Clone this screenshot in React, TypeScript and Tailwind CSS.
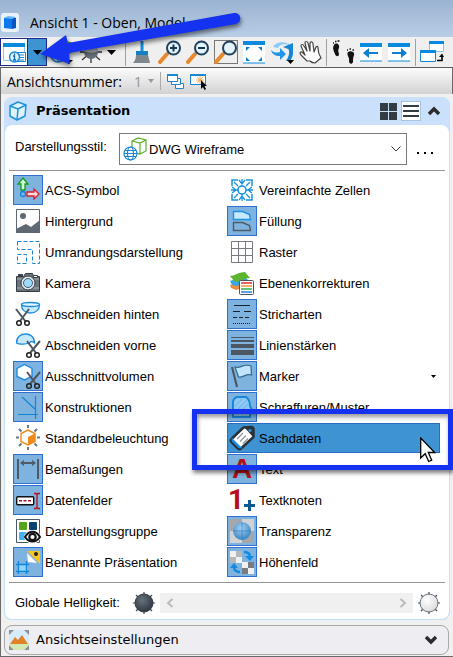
import React, { useState } from 'react'
import type { ReactNode } from 'react'

const Glyph = ({ children, size = 30 }: { children: ReactNode; size?: number }) => (
    <svg viewBox={`0 0 ${size} ${size}`} width={size} height={size} fill="none" aria-hidden="true" className="block shrink-0">
        {children}
    </svg>
)

const Caret = () => (
    <svg viewBox="0 0 9 5" width="9" height="5" aria-hidden="true"><path d="M0 0h9L4.500 5z" fill="#000" /></svg>
)

const Chevron = ({ down = false }: { down?: boolean }) => (
    <svg viewBox="0 0 14 10" width="14" height="10" fill="none" aria-hidden="true">
        <path d={down ? 'M2 2l5 5 5-5' : 'M2 8l5-5 5 5'} stroke="#2b2b2b" strokeWidth="3.4" />
    </svg>
)

const Scissors = () => (
    <g>
        <path d="M14 11l9 12M27 11l-10 12" stroke="#4d5660" strokeWidth="2" />
        <circle cx="16" cy="25" r="2.300" stroke="#222" strokeWidth="1.500" />
        <circle cx="24" cy="25" r="2.300" stroke="#222" strokeWidth="1.500" />
    </g>
)

const Magnifier = ({ children }: { children?: ReactNode }) => (
    <g>
        <path d="M2 22l7-8" stroke="#e8892b" strokeWidth="4" strokeLinecap="round" />
        <path d="M9 14l3-3" stroke="#8a949c" strokeWidth="2" />
        <circle cx="15.500" cy="8" r="6.500" fill="#e3f3fd" stroke="#1f3f5c" strokeWidth="2" />
        {children}
    </g>
)

const Sun = ({ dark = false }: { dark?: boolean }) => (
    <Glyph size={24}>
        <defs>
            <radialGradient id={dark ? 'sunDark' : 'sunLight'} cx="0.4" cy="0.35" r="0.7">
                <stop offset="0" stopColor={dark ? '#66727e' : '#ffffff'} />
                <stop offset="1" stopColor={dark ? '#2d353e' : '#d9d9d9'} />
            </radialGradient>
        </defs>
        <path d="M12 1v22M1 12h22M4 4l16 16M20 4L4 20" stroke="#3e4954" strokeWidth="1.200" />
        <circle cx="12" cy="12" r="9" fill={dark ? 'url(#sunDark)' : 'url(#sunLight)'} stroke={dark ? '#333c46' : '#66727d'} />
    </Glyph>
)

const WindowArrow = ({ right = false }: { right?: boolean }) => (
    <Glyph size={24}>
        <path d="M1 3h22v18H1z" fill="#fff" />
        <path d="M1 3h22v4H1z" fill="#0a8ade" />
        <path d="M1 21h22" stroke="#0a8ade" />
        <path d={right ? 'M5 13h12' : 'M19 13H7'} stroke="#0a7fd4" strokeWidth="2" />
        <path d={right ? 'M14 8l6 5-6 5z' : 'M10 8l-6 5 6 5z'} fill="#0a7fd4" />
    </Glyph>
)

const acs = (
    <Glyph>
        <path d="M10 3l5 6h-3v6H8V9H5z" fill="#d8f7d8" stroke="#129c22" strokeWidth="1.300" />
        <circle cx="10" cy="19" r="2.500" stroke="#1583dc" strokeWidth="1.300" />
        <path d="M26 19l-5-5v3h-7v4h7v3z" fill="#ffdada" stroke="#d51f2e" strokeWidth="1.300" />
    </Glyph>
)

const background = (
    <Glyph>
        <path d="M3.500 3.500h23v23h-23z" fill="#fff" stroke="#5d6873" />
        <circle cx="10" cy="10" r="3" fill="#5d6873" />
        <path d="M3 23l10-5 5 3 9-7v13H3z" fill="#5d6873" />
    </Glyph>
)

const outline = (
    <Glyph>
        <path d="M4.500 4.500h22v22h-7v-14h-15zM4.500 17.500h9v9h-9z" stroke="#1b86d2" strokeDasharray="4 2" />
    </Glyph>
)

const camera = (
    <Glyph>
        <path d="M5 6h5v2H5z" fill="#3f464d" />
        <path d="M3.500 8.500h7l2-3h7l1 3h6v15h-23z" fill="#6c757e" stroke="#343b42" />
        <path d="M4 11h22M4 20h22" stroke="#aab1b7" />
        <path d="M20.500 7.500h4v2h-4z" fill="#fff" stroke="#343b42" />
        <circle cx="15" cy="15" r="7" fill="#e6eaed" stroke="#343b42" />
        <circle cx="15" cy="15" r="4.500" fill="#9fdcfa" stroke="#3e5b70" />
    </Glyph>
)

const cutBack = (
    <Glyph>
        <path d="M8.500 6c0 5 4 8 9 8s9-3 9-8z" fill="#c7e9fb" stroke="#1b8de0" strokeWidth="1.300" />
        <ellipse cx="17.500" cy="5.500" rx="9" ry="2" fill="#e7f6fe" stroke="#1b8de0" strokeWidth="1.300" />
        <path d="M3 10l10 13M16 10L7 22" stroke="#4d5660" strokeWidth="2" />
        <circle cx="6" cy="24" r="2.300" stroke="#222" strokeWidth="1.500" />
        <circle cx="14" cy="24" r="2.300" stroke="#222" strokeWidth="1.500" />
    </Glyph>
)

const cutFront = (
    <Glyph>
        <path d="M3.500 13c0-6 4-9 9-9s9 3 9 9c-2-2-4-2-5 0-3 1-10 2-13 0z" fill="#c7e9fb" stroke="#1b8de0" strokeWidth="1.300" />
        <Scissors />
    </Glyph>
)

const clipVolume = (
    <Glyph>
        <path d="M11.500 3.500l7.500 4v8l-7.500 3.500L4 15.500v-8z" fill="#fff" stroke="#1b8de0" strokeWidth="1.400" />
        <Scissors />
    </Glyph>
)

const construction = (
    <Glyph>
        <path d="M9 5l13 12M22.500 4v23M5 22.500h20" stroke="#1483d6" strokeWidth="1.200" />
    </Glyph>
)

const lighting = (
    <Glyph>
        <path d="M15 2v3M15 24v3M3 14.500h3M24 14.500h3M6 6l2.500 2.500M24 6l-2.500 2.500M6 23l2.500-2.500M24 23l-2.500-2.500" stroke="#66788a" strokeWidth="2" />
        <path d="M15 7l7 3.500v8L15 22l-7-3.500v-8z" fill="#fff" stroke="#ec8a1b" strokeWidth="1.400" />
        <path d="M15 14l7-3.500v8L15 22z" fill="#ec8a1b" />
    </Glyph>
)

const dimension = (
    <Glyph>
        <path d="M5 5v20M25 5v20M8 9h14" stroke="#505a66" strokeWidth="2" />
        <path d="M7 9l4-3v6zM23 9l-4-3v6z" fill="#505a66" />
    </Glyph>
)

const dataFields = (
    <Glyph>
        <rect x="3.700" y="11.700" width="17" height="8" rx="1" fill="#fff" stroke="#111" strokeWidth="1.400" />
        <path d="M6 15.700h13" stroke="#9a1420" strokeWidth="1.400" strokeDasharray="3 1.500" />
        <path d="M21 8.500h2l1 1 1-1h2M24 9v14M21 23.500h2l1-1 1 1h2" stroke="#b0121c" strokeWidth="1.300" />
    </Glyph>
)

const displayGroup = (
    <Glyph>
        <path d="M3.500 3.500h23v23h-23z" fill="#fff" stroke="#4d5962" />
        <rect x="6" y="6" width="8" height="8" rx="1" fill="#55a51c" />
        <rect x="16" y="6" width="8" height="8" rx="1" fill="#0a446e" />
        <rect x="6" y="16" width="8" height="8" rx="1" fill="#45b4f5" />
        <ellipse cx="19.500" cy="21" rx="8.500" ry="6.500" fill="#fff" />
        <path d="M12 21c4-7 11-7 15 0-4 6-11 6-15 0z" fill="#fff" stroke="#111" strokeWidth="2" />
        <circle cx="19.500" cy="21" r="3.200" fill="#fff" stroke="#111" strokeWidth="2.200" />
    </Glyph>
)

const namedView = (
    <Glyph>
        <path d="M5.500 17.500h9v8h-9z" fill="#8fd3fb" />
        <path d="M5.500 14v13M13.500 14v13M3 17.500h13M3 24.500h13" stroke="#0f86dc" strokeWidth="1.300" />
        <path d="M14 4h13v13z" fill="#fac61e" />
        <path d="M14 6l10 10-9-1z" fill="#fff" />
        <circle cx="23" cy="7" r="2" fill="#222" />
    </Glyph>
)

const cells = (
    <Glyph>
        <path d="M5 11V5h6M19 5h6v6M25 19v6h-6M11 25H5v-6" stroke="#1b93e0" strokeWidth="1.500" />
        <path d="M15 4v7M15 19v7M4 15h7M19 15h7M7 7l4 4M23 7l-4 4M7 23l4-4M23 23l-4-4M12 5l3 4 3-4M12 25l3-4 3 4M5 12l4 3-4 3M25 12l-4 3 4 3" stroke="#1b93e0" strokeWidth="1.300" />
        <circle cx="15" cy="15" r="4" fill="#fff" stroke="#1b93e0" strokeWidth="1.600" />
    </Glyph>
)

const fill = (
    <Glyph>
        <path d="M6.500 5.500h9l7 3 1 5h-17z" fill="#c8e9fd" stroke="#1b93e0" strokeWidth="1.400" />
        <path d="M6.500 16.500h9l7 3 1 5h-17z" stroke="#4f5b66" strokeWidth="1.400" />
    </Glyph>
)

const gridIcon = (
    <Glyph>
        <path d="M4.500 4.500h21v21h-21zM11.500 4v22M18.500 4v22M4 11.500h22M4 18.500h22" stroke="#76797d" />
    </Glyph>
)

const layers = (
    <Glyph>
        <path d="M3 17l14-5 5 6-13 4-5-2z" fill="#e9913c" />
        <path d="M3 13l14-5 5 5-12 5-5-1z" fill="#3aa5e4" />
        <path d="M3 8c5 0 8-4 15-4l5 6c-7 0-9 4-15 4z" fill="#5bb531" />
        <rect x="12.500" y="12.500" width="14" height="14" rx="1" fill="#fff" stroke="#4b5560" />
        <path d="M14 15h11" stroke="#e02f2f" strokeWidth="1.500" />
        <path d="M14 18h11" stroke="#f09433" strokeWidth="1.500" />
        <path d="M14 21h11" stroke="#2eb04d" strokeWidth="1.500" />
        <path d="M14 24h11" stroke="#2a7fe0" strokeWidth="1.500" />
    </Glyph>
)

const lineStyles = (
    <Glyph>
        <path d="M7 6.500h16" stroke="#16222e" />
        <path d="M6 12.500h18" stroke="#16222e" strokeDasharray="7 4" />
        <path d="M6 18.500h18" stroke="#16222e" strokeDasharray="4 2" />
        <path d="M6 24.500h18" stroke="#16222e" strokeDasharray="1 1" />
    </Glyph>
)

const lineWeights = (
    <Glyph>
        <path d="M4 7h23v1H4zM4 10h23v2H4zM4 14h23v4H4zM4 20h23v5H4z" fill="#4c5762" />
    </Glyph>
)

const marker = (
    <Glyph>
        <path d="M5 6l5 20" stroke="#4a545e" strokeWidth="2" />
        <path d="M8 6c6 2 8-4 16-1l.5 9c-6-2-8 3-13 2z" fill="#c0e5fb" stroke="#35688f" strokeWidth="1.200" />
    </Glyph>
)

const hatch = (
    <Glyph>
        <path d="M10 5h9c3 2 4 5 4 9l2 4-2 1v6H6V11c0-3 1-5 4-6z" fill="#8ec9f4" stroke="#1787de" strokeWidth="2" />
        <path d="M8 14l7-7M8 20L20 8M10 23l11-11M15 23l6-6" stroke="#6bb2ea" />
    </Glyph>
)

const tag = (
    <Glyph>
        <path d="M16.500 4.500L24 4c1.500 0 2.500 1 2.500 2.500V14L14 25.500c-1 1-2 1-3 0L4.500 19c-1-1-1-2 0-3z" fill="#fff" stroke="#2b3238" strokeWidth="2.500" strokeLinejoin="round" />
        <path d="M17 4l8 0 2 3-1 7z" fill="#2b3238" />
        <path d="M5.500 16.500l8 8-1.500 0-6.500-6.500z" fill="#1b8de0" stroke="#1b8de0" strokeWidth="1.500" />
        <path d="M10 16l6-6M13 18.500l6-6M16 20.500l5-5" stroke="#8b949c" strokeWidth="1.200" />
        <circle cx="23" cy="7.500" r="1.600" fill="#3e93d3" />
    </Glyph>
)

const letterA = (
    <span className="block w-[28px] text-center font-['Liberation_Sans',sans-serif] text-[28px] leading-[30px] font-bold text-[#b5101a]">A</span>
)

const textNode = (
    <span className="flex w-[28px] items-end font-['Roboto',sans-serif] text-[28px] leading-[30px] font-bold text-[#b5101a]">
        1
        <svg viewBox="0 0 11 15" width="11" height="15" fill="none" aria-hidden="true" className="shrink-0">
            <path d="M5.500 0v11M0 5.500h11" stroke="#0b5a94" strokeWidth="3" />
        </svg>
    </span>
)

const transparency = (
    <Glyph>
        <defs>
            <radialGradient id="sphere" cx="0.45" cy="0.35" r="0.7">
                <stop offset="0" stopColor="#a3d2f3" />
                <stop offset="1" stopColor="#2f7fc0" />
            </radialGradient>
        </defs>
        <rect x="3" y="3" width="24" height="24" rx="2" fill="#a4a8ad" />
        <path d="M15 3h12v12H15zM3 15h12v12H3z" fill="#d0d3d6" />
        <circle cx="15" cy="15" r="9" fill="url(#sphere)" />
        <path d="M15 6v18M6 15h18" stroke="#2d6fa8" strokeWidth="0.500" />
    </Glyph>
)

const heightField = (
    <Glyph>
        <path d="M3 4h12v12H3zM15 15h12v12H15z" fill="#f0f0f0" />
        <path d="M9 4h6v6H9zM3 10h6v6H3z" fill="#b4b7bb" />
        <path d="M21 15h6v6h-6zM15 21h6v6h-6z" fill="#777c82" />
        <path d="M17 5c4 0 6 2 6 5M13 25c-4 0-6-2-6-5" stroke="#118be0" strokeWidth="2.400" />
        <path d="M18 9h9l-4 5zM3 21h8l-4-5z" fill="#118be0" />
    </Glyph>
)

type Item = { label: string; icon: ReactNode; on?: boolean }

const leftItems: Item[] = [
    { label: 'ACS-Symbol', icon: acs, on: true },
    { label: 'Hintergrund', icon: background },
    { label: 'Umrandungsdarstellung', icon: outline },
    { label: 'Kamera', icon: camera },
    { label: 'Abschneiden hinten', icon: cutBack },
    { label: 'Abschneiden vorne', icon: cutFront },
    { label: 'Ausschnittvolumen', icon: clipVolume, on: true },
    { label: 'Konstruktionen', icon: construction, on: true },
    { label: 'Standardbeleuchtung', icon: lighting },
    { label: 'Bemaßungen', icon: dimension, on: true },
    { label: 'Datenfelder', icon: dataFields, on: true },
    { label: 'Darstellungsgruppe', icon: displayGroup },
    { label: 'Benannte Präsentation', icon: namedView, on: true },
]

const rightItems: Item[] = [
    { label: 'Vereinfachte Zellen', icon: cells },
    { label: 'Füllung', icon: fill, on: true },
    { label: 'Raster', icon: gridIcon },
    { label: 'Ebenenkorrekturen', icon: layers },
    { label: 'Stricharten', icon: lineStyles, on: true },
    { label: 'Linienstärken', icon: lineWeights, on: true },
    { label: 'Marker', icon: marker, on: true },
    { label: 'Schraffuren/Muster', icon: hatch, on: true },
    { label: 'Sachdaten', icon: tag },
    { label: 'Text', icon: letterA, on: true },
    { label: 'Textknoten', icon: textNode },
    { label: 'Transparenz', icon: transparency, on: true },
    { label: 'Höhenfeld', icon: heightField, on: true },
]

const ToggleRow = ({ item }: { item: Item }) => {
    const [on, setOn] = useState(!!item.on)
    const hovered = item.label === 'Sachdaten'

    return (
        <div className="relative">
            <button
                type="button"
                aria-pressed={on}
                onClick={() => setOn(!on)}
                className={`flex h-[30px] w-full items-center gap-0.5 text-left ${hovered ? 'bg-[#3e93d3] outline -outline-offset-1 outline-[#2a6cc4]' : ''}`}
            >
                <span className={`flex size-[30px] shrink-0 items-center justify-center ${on ? 'bg-[#7fb3df] outline -outline-offset-1 outline-[#2f6fd0]' : ''}`}>
                    {item.icon}
                </span>
                <span className="flex-1 pt-0.5 whitespace-nowrap">{item.label}</span>
                {item.label === 'Marker' && (
                    <svg viewBox="0 0 5 3" width="5" height="3" aria-hidden="true" className="mr-1"><path d="M0 0h5L2.500 3z" fill="#000" /></svg>
                )}
            </button>
            {hovered && (
                <>
                    <div className="pointer-events-none absolute -top-3.5 -right-[13px] -bottom-[17px] -left-[35px] z-10 border-[5px] border-[#1532f0] shadow-[1px_3px_4px_rgba(0,0,0,0.5),inset_1px_3px_4px_rgba(0,0,0,0.4)]" />
                    <svg viewBox="0 0 16 26" width="16" height="26" aria-hidden="true" className="pointer-events-none absolute top-3.5 right-1 z-20">
                        <path d="M.7 1v20l4.500-4.300 3.500 7.800 3-1.300-3.400-7.700h6.400z" fill="#fff" stroke="#000" strokeWidth="1.300" />
                    </svg>
                </>
            )}
        </div>
    )
}

const ToolButton = ({ label, children }: { label: string; children: ReactNode }) => (
    <button type="button" aria-label={label} className="flex h-7 w-7 shrink-0 items-center justify-center">{children}</button>
)

const Separator = () => <span className="mx-0.5 h-[27px] w-px shrink-0 bg-[#a0a0a0]" />

const App = () => {
    return (
        <div className="relative flex min-h-screen flex-col overflow-hidden bg-[#f0f0f0] font-['Liberation_Sans',Arial,sans-serif] text-[13px] text-black">

            {/* title bar */}
            <header className="flex h-[37px] items-center gap-2.5 bg-linear-to-b from-[#9ab3d1] to-[#b9cee6] pt-2 font-['Open_Sans',sans-serif] text-[14px]">
                <svg viewBox="0 0 20 20" width="20" height="20" fill="none" aria-hidden="true">
                    <rect x="1" y="0" width="18" height="19" rx="3" fill="#e9f2fb" />
                    <path d="M4 5l8-1v12l-8-1z" fill="#0b78ee" />
                    <path d="M12 4l4 1v10l-4 1z" fill="#0653c4" />
                    <path d="M4 5l4-2 8 1-4 2z" fill="#64b5fb" />
                </svg>
                <h1>Ansicht 1 - Oben, Model</h1>
            </header>

            {/* tools */}
            <div className="flex h-[31px] items-center overflow-hidden border-b border-[#5a5a5a] bg-[#efefef]">
                <button type="button" aria-label="Ansichtsattribute" className="flex h-7 w-[47px] shrink-0 items-center border border-[#1c2a8c] bg-[#3e93d3]">
                    <span className="flex h-full w-[27px] items-center justify-center border-r border-[#1c2a8c] bg-white">
                        <Glyph size={24}>
                            <path d="M1.500 3.500h21v17h-21z" fill="#fff" stroke="#8ac4ee" />
                            <path d="M1 3h22v4H1z" fill="#0a8ade" />
                            <path d="M13.500 12.500h10v9h-10zM17 15h5M17 17.500h5M17 20h5" fill="#fff" stroke="#1687d8" />
                            <circle cx="12.500" cy="17" r="5" fill="#dff1fd" stroke="#1687d8" strokeWidth="1.400" />
                            <path d="M12.500 13.500v1.500M11 16h1.500v4M11 20h3" stroke="#1268b8" strokeWidth="1.300" />
                        </Glyph>
                    </span>
                    <span className="flex flex-1 justify-center"><Caret /></span>
                </button>
                <ToolButton label="Darstellungsstil">
                    <Glyph size={24}>
                        <path d="M11 5l5-4 6 2v9l-5 3" fill="#fff" stroke="#51a82a" strokeWidth="1.500" />
                        <circle cx="9" cy="15" r="7" fill="#e8f5fd" stroke="#1b86d2" strokeWidth="1.500" />
                        <path d="M2 15h14M9 8v14" stroke="#1b86d2" />
                        <path d="M15 20h9l-4.500 4z" fill="#000" />
                    </Glyph>
                </ToolButton>
                <button type="button" aria-label="Helligkeit" className="flex h-7 w-[48px] shrink-0 items-center gap-1 pl-1">
                    <Glyph size={24}>
                        <path d="M12 12v11M12 12L3 20M12 12l9 8M12 12H1M12 12h11" stroke="#333" strokeWidth="1.300" />
                        <circle cx="12" cy="12" r="7" fill="#646c74" />
                        <path d="M5 11c1-4 3-6 7-6s6 2 7 6c-4 2-10 2-14 0z" fill="#b9bfc4" />
                    </Glyph>
                    <Caret />
                </button>
                <Separator />
                <ToolButton label="Ansicht aktualisieren">
                    <Glyph size={24}>
                        <path d="M10.500 1h3v11h-3z" fill="#1390de" />
                        <path d="M6 11h12v4H6z" fill="#147fc4" />
                        <path d="M6 15h12l2 8H3c2-2 3-5 3-8z" fill="#7f878d" />
                    </Glyph>
                </ToolButton>
                <ToolButton label="Vergrößern">
                    <Glyph size={24}><Magnifier><path d="M15.500 4.500v7M12 8h7" stroke="#16364f" strokeWidth="2" /></Magnifier></Glyph>
                </ToolButton>
                <ToolButton label="Verkleinern">
                    <Glyph size={24}><Magnifier><path d="M12 8h7" stroke="#16364f" strokeWidth="2" /></Magnifier></Glyph>
                </ToolButton>
                <ToolButton label="Fenster vergrößern">
                    <Glyph size={24}>
                        <path d="M.5.500h23v23H.5z" stroke="#000" strokeDasharray="1 1" />
                        <Magnifier />
                    </Glyph>
                </ToolButton>
                <ToolButton label="Ansicht einpassen">
                    <Glyph size={24}>
                        <path d="M1 1h22v22H1z" fill="#fff" />
                        <path d="M1 1h22v4H1z" fill="#0a8ade" />
                        <path d="M1 23h22" stroke="#0a8ade" />
                        <path d="M4 7h4l-4 4zM20 7h-4l4 4zM4 21v-4l4 4zM20 21v-4l-4 4z" fill="#0a7fd4" />
                    </Glyph>
                </ToolButton>
                <ToolButton label="Ansicht drehen">
                    <Glyph size={24}>
                        <path d="M3 7c3-6 14-6 18-1-5-3-12-2-13 2z" fill="#8bcaf3" />
                        <path d="M17 6c3 4 3 9-1 15h4c4-5 4-11 1-15z" fill="#1587d4" />
                        <path d="M1 10c3 3 6 3 9 2V8l6 6-6 6v-4c-5 0-8-2-9-6z" fill="#2296e4" />
                        <path d="M13 7l10-4v8z" fill="#1587d4" />
                        <path d="M17 20h7l-3.500 4z" fill="#000" />
                    </Glyph>
                </ToolButton>
                <ToolButton label="Ansicht verschieben">
                    <Glyph size={24}>
                        <path d="M9 21L3 15c-2-3 0-4 2-2l2 2L3 6c0-2 2-2 3 0l3 5-2-8c0-2 2-2 3 0l2 8V3c1-2 3-1 3 1l1 8 2-5c1-1 2-1 2 1 0 4 1 7 3 10l-6 5c-2 0-4-1-5-2z" fill="#fff" stroke="#444" strokeWidth="1.200" strokeLinejoin="round" />
                    </Glyph>
                </ToolButton>
                <Separator />
                <ToolButton label="Begehen">
                    <Glyph size={24}>
                        <path d="M3 5c2-3 6-1 5 3-1 2-1 3 0 6 0 3-3 3-4 0C3 11 1 8 3 5z" fill="#111" />
                        <path d="M17 12c3-2 7 0 6 3s-1 4-1 7c-1 3-4 2-4-1 1-3-3-6-1-9z" fill="#111" />
                        <path d="M2 3h1M4 1.500h1.500M6.500 1h2M16 10h1M18.500 9h1.500M21.500 10h1.500" stroke="#111" strokeWidth="1.600" />
                    </Glyph>
                </ToolButton>
                <ToolButton label="Vorherige Ansicht"><WindowArrow /></ToolButton>
                <ToolButton label="Nächste Ansicht"><WindowArrow right /></ToolButton>
                <Separator />
                <ToolButton label="Ansicht kopieren">
                    <Glyph size={24}>
                        <path d="M9.500 1.500h14v10h-14z" fill="#fff" stroke="#8ac4ee" />
                        <path d="M9 1h15v3H9z" fill="#0a8ade" />
                        <path d="M.5 10.500h15v11H.5z" fill="#fff" stroke="#1687d8" />
                        <path d="M0 10h16v3H0z" fill="#0a8ade" />
                        <path d="M17 20.500h5V15" stroke="#000" strokeWidth="1.600" />
                        <path d="M19 17l3-3.500 2 3.500z" fill="#000" />
                    </Glyph>
                </ToolButton>
            </div>

            {/* view number */}
            <div className="flex h-[26px] items-center border-x border-[#6b6b6b] bg-linear-to-b from-[#fcfcfc] to-[#d2d2d2] pl-1.5 font-['Open_Sans',sans-serif] text-[14px]">
                <span>Ansichtsnummer:</span>
                <button type="button" aria-label="Ansichtsnummer wählen" className="ml-3 flex items-center gap-1.5 text-[#9a8f8f]">
                    1
                    <svg viewBox="0 0 6 4" width="6" height="4" aria-hidden="true"><path d="M0 0h6L3 4z" fill="#999" /></svg>
                </button>
                <span className="mx-1.5 h-[18px] w-px bg-[#aaa]" />
                <button type="button" aria-label="Ansichten stapeln">
                    <svg viewBox="0 0 17 17" width="17" height="17" fill="none" aria-hidden="true">
                        <path d="M8.500 10.500h8v5h-8z" fill="#fff" stroke="#1b86d2" />
                        <path d="M4.500 5.500h9v6h-9z" fill="#fff" stroke="#1b86d2" />
                        <path d="M.5 1.500h10v7H.5z" fill="#fff" stroke="#1b86d2" />
                        <path d="M0 1h11v2H0z" fill="#1b86d2" />
                    </svg>
                </button>
                <button type="button" aria-label="Neue Ansicht" className="ml-1.5">
                    <svg viewBox="0 0 18 18" width="18" height="18" fill="none" aria-hidden="true">
                        <path d="M.5 2.500h15v10H.5z" fill="#fff" stroke="#1b86d2" />
                        <path d="M0 2h16v2H0z" fill="#1b86d2" />
                        <path d="M10 4v8M6 8h8M7 5l6 6M13 5l-6 6" stroke="#efaa4d" />
                        <path d="M11 8v9l2-2 1.500 3 1.500-1-1.500-3H17z" fill="#000" />
                    </svg>
                </button>
            </div>

            <main className="flex flex-1 flex-col gap-[5px] border-b-2 border-l border-[#6b6b6b] px-[3px] pt-[3px] pb-px">
                <section className="rounded-lg border-r border-[#c4def6] bg-[#cae0fb]">
                    <div className="flex h-7 items-center pr-2 pl-1">
                        <svg viewBox="0 0 20 20" width="20" height="20" fill="none" aria-hidden="true">
                            <path d="M2 5l8-4 8 3-1 11-8 4-7-4z" fill="#dff2fd" stroke="#1b93e0" strokeWidth="1.500" strokeLinejoin="round" />
                            <path d="M2 5l8 3 8-4M10 8l-1 11" stroke="#1b93e0" strokeWidth="1.500" />
                        </svg>
                        <h2 className="ml-2 flex-1 font-['DejaVu_Sans',Verdana,sans-serif] font-bold">Präsentation</h2>
                        <button type="button" aria-label="Symbole" className="mr-1">
                            <svg viewBox="0 0 17 17" width="17" height="17" aria-hidden="true"><path d="M0 0h8v8H0zM9 0h8v8H9zM0 9h8v8H0zM9 9h8v8H9z" fill="#333b43" /></svg>
                        </button>
                        <button type="button" aria-label="Liste" className="flex size-5 items-center justify-center border border-[#a8c3e0] bg-white">
                            <svg viewBox="0 0 16 14" width="16" height="14" aria-hidden="true"><path d="M0 1h16v2H0zM0 6h16v2H0zM0 11h16v2H0z" fill="#333b43" /></svg>
                        </button>
                        <button type="button" aria-label="Einklappen" className="ml-1.5"><Chevron /></button>
                    </div>

                    <div className="rounded-lg border-b border-l border-[#c4e0f4] bg-white px-1">
                        <div className="flex items-center pt-2 pr-3 pb-[5px] pl-1.5">
                            <label htmlFor="style" className="w-[104px] shrink-0 pb-1">Darstellungsstil:</label>
                            <div className="relative h-8 flex-1">
                                <svg viewBox="0 0 24 24" width="24" height="24" fill="none" aria-hidden="true" className="pointer-events-none absolute top-1 left-1">
                                    <path d="M9 4l6-3 8 2v11l-6 3-8-2zM9 4l8 2 6-3M17 6v11" fill="#fff" stroke="#5aae2c" strokeWidth="1.200" />
                                    <circle cx="7.500" cy="16.500" r="6.500" fill="#fff" stroke="#1b86d2" strokeWidth="1.200" />
                                    <ellipse cx="7.500" cy="16.500" rx="3" ry="6.500" stroke="#1b86d2" strokeWidth="1.200" />
                                    <path d="M1 16.500h13M2 13.500h11M2 19.500h11" stroke="#1b86d2" />
                                </svg>
                                <select id="style" className="h-8 w-full appearance-none border border-[#7a7a7a] bg-transparent pt-0.5 pl-[29px]">
                                    <option>DWG Wireframe</option>
                                </select>
                                <svg viewBox="0 0 10 6" width="10" height="6" fill="none" aria-hidden="true" className="pointer-events-none absolute top-[13px] right-1.5">
                                    <path d="M.5.500L5 5 9.500.500" stroke="#333" />
                                </svg>
                            </div>
                            <button type="button" aria-label="Darstellungsstile verwalten" className="ml-2.5 pt-2">
                                <svg viewBox="0 0 16 4" width="16" height="4" aria-hidden="true"><path d="M0 1h2v2H0zM7 1h2v2H7zM14 1h2v2h-2z" fill="#000" /></svg>
                            </button>
                        </div>

                        <div className="grid grid-cols-[214px_1fr] border-y border-[#949494] pt-1 pr-[5px] pb-[5px] pl-1">
                            <div className="grid gap-px">
                                {leftItems.map((item) => <ToggleRow key={item.label} item={item} />)}
                            </div>
                            <div className="grid gap-px">
                                {rightItems.map((item) => <ToggleRow key={item.label} item={item} />)}
                            </div>
                        </div>

                        <div className="flex items-center pt-2 pr-1 pb-1 pl-1.5">
                            <label htmlFor="brightness" className="mr-3 shrink-0 whitespace-nowrap">Globale Helligkeit:</label>
                            <Sun dark />
                            <div className="mx-1 flex h-5 min-w-0 flex-1 items-center bg-[#f0f0f0] px-1.5">
                                <svg viewBox="0 0 8 10" width="8" height="10" fill="none" aria-hidden="true" className="shrink-0"><path d="M6.500 1L2 5l4.500 4" stroke="#b8b8b8" strokeWidth="1.800" /></svg>
                                <input id="brightness" type="range" disabled className="min-w-0 flex-1 appearance-none bg-transparent [&::-webkit-slider-thumb]:appearance-none" />
                                <svg viewBox="0 0 8 10" width="8" height="10" fill="none" aria-hidden="true" className="shrink-0"><path d="M1.500 1L6 5 1.500 9" stroke="#b8b8b8" strokeWidth="1.800" /></svg>
                            </div>
                            <Sun />
                        </div>
                    </div>
                </section>

                <section className="mr-px flex h-[30px] items-center rounded-lg border border-[#a9a9a9] bg-[#eeeef2] pr-2.5 pl-1">
                    <svg viewBox="0 0 20 20" width="20" height="20" fill="none" aria-hidden="true">
                        <path d="M0 0h20v20H0z" fill="#8b9096" />
                        <path d="M5 0h10l5 5v10l-5 5H5l-5-5V5z" fill="#d6ecfb" />
                        <path d="M0 14h20v1l-5 5H5l-5-5z" fill="#d3e8b2" />
                        <path d="M1 14l5-7 3 3 4-5 6 9z" fill="#e08326" />
                    </svg>
                    <h2 className="ml-[7px] flex-1 font-['DejaVu_Sans',Verdana,sans-serif]">Ansichtseinstellungen</h2>
                    <button type="button" aria-label="Ausklappen"><Chevron down /></button>
                </section>
            </main>

            {/* pointer arrow */}
            <svg viewBox="0 0 210 60" width="210" height="60" aria-hidden="true" className="pointer-events-none absolute top-2.5 left-9 z-20 drop-shadow-[1px_3px_2px_rgba(0,0,0,0.5)]">
                <path d="M4 44l26-19 2 8L198 3c7-1 9 9 2 11L33 43l1 11z" fill="#1532f0" />
            </svg>
        </div>
    )
}

export default App
